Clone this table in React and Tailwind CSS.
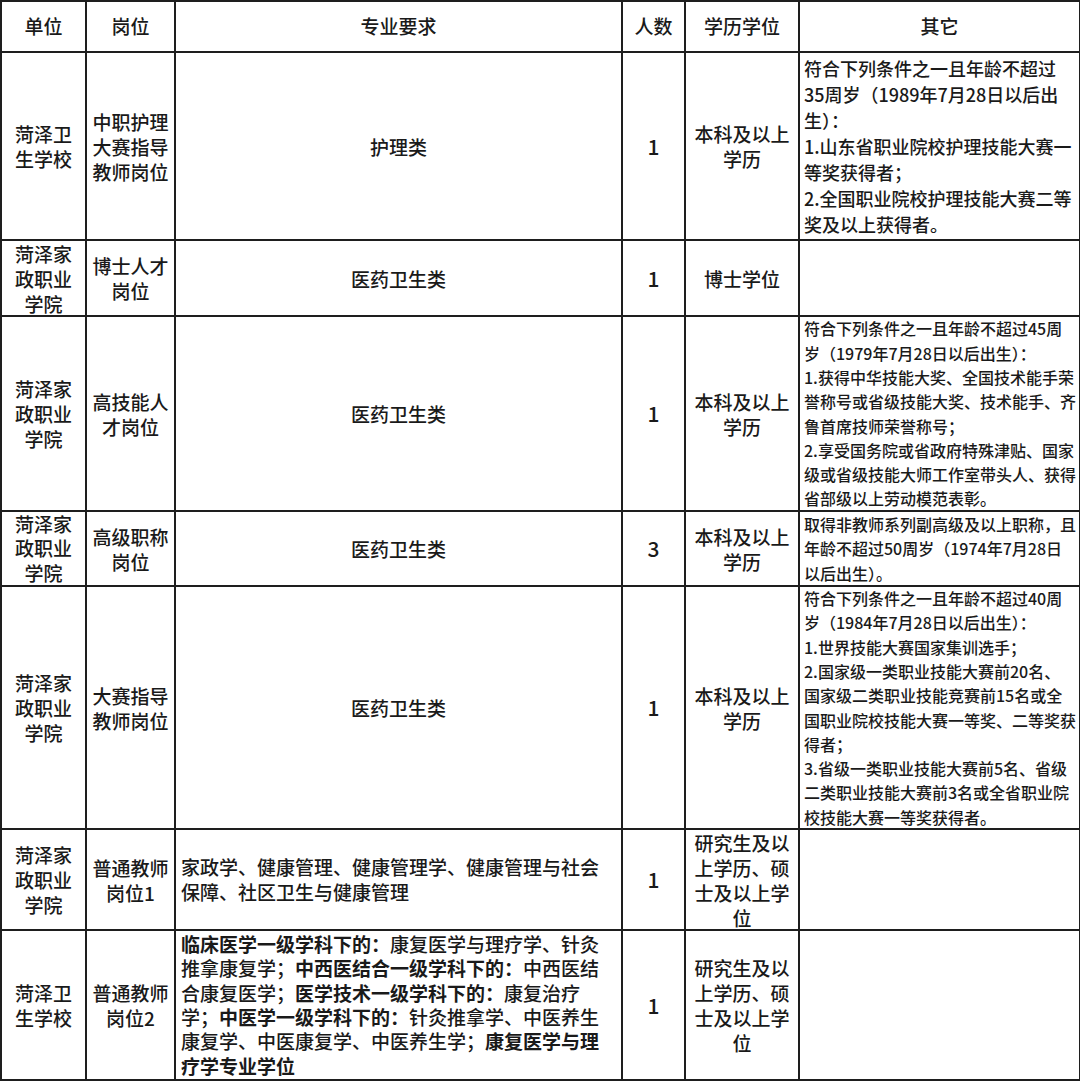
import React from "react";

// Column widths include each cell's 2px right border
const COLS = "grid-cols-[85px_89px_447px_63px_114px_281px]";
const ROWS = "grid-rows-[51px_188px_76px_195px_75px_243px_101px_150px]";

const FONT = { fontFamily: '"Noto Sans CJK SC", "Noto Sans", sans-serif' };

function Cell({ children, left = false, className = "" }) {
  return (
    <div
      className={`border-r-2 border-b-2 border-[#1e1e1e] flex items-center ${
        left ? "justify-start text-left pl-[4px]" : "justify-center text-center"
      } ${className}`}
    >
      <div className="whitespace-nowrap">{children}</div>
    </div>
  );
}

function Lines({ lines }) {
  return lines.map((l, i) => (
    <div key={i}>{l}</div>
  ));
}

const B = ({ children }) => <span className="font-bold">{children}</span>;

const rows = [
  {
    unit: ["菏泽卫", "生学校"],
    post: ["中职护理", "大赛指导", "教师岗位"],
    major: "护理类",
    count: "1",
    edu: ["本科及以上", "学历"],
    other: [
      "符合下列条件之一且年龄不超过",
      "35周岁（1989年7月28日以后出",
      "生）：",
      "1.山东省职业院校护理技能大赛一",
      "等奖获得者；",
      "2.全国职业院校护理技能大赛二等",
      "奖及以上获得者。",
    ],
    big: true,
  },
  {
    unit: ["菏泽家", "政职业", "学院"],
    post: ["博士人才", "岗位"],
    major: "医药卫生类",
    count: "1",
    edu: ["博士学位"],
    other: [],
  },
  {
    unit: ["菏泽家", "政职业", "学院"],
    post: ["高技能人", "才岗位"],
    major: "医药卫生类",
    count: "1",
    edu: ["本科及以上", "学历"],
    other: [
      "符合下列条件之一且年龄不超过45周",
      "岁（1979年7月28日以后出生）：",
      "1.获得中华技能大奖、全国技术能手荣",
      "誉称号或省级技能大奖、技术能手、齐",
      "鲁首席技师荣誉称号；",
      "2.享受国务院或省政府特殊津贴、国家",
      "级或省级技能大师工作室带头人、获得",
      "省部级以上劳动模范表彰。",
    ],
  },
  {
    unit: ["菏泽家", "政职业", "学院"],
    post: ["高级职称", "岗位"],
    major: "医药卫生类",
    count: "3",
    edu: ["本科及以上", "学历"],
    other: [
      "取得非教师系列副高级及以上职称，且",
      "年龄不超过50周岁（1974年7月28日",
      "以后出生）。",
    ],
    tight: true,
  },
  {
    unit: ["菏泽家", "政职业", "学院"],
    post: ["大赛指导", "教师岗位"],
    major: "医药卫生类",
    count: "1",
    edu: ["本科及以上", "学历"],
    other: [
      "符合下列条件之一且年龄不超过40周",
      "岁（1984年7月28日以后出生）：",
      "1.世界技能大赛国家集训选手；",
      "2.国家级一类职业技能大赛前20名、",
      "国家级二类职业技能竞赛前15名或全",
      "国职业院校技能大赛一等奖、二等奖获",
      "得者；",
      "3.省级一类职业技能大赛前5名、省级",
      "二类职业技能大赛前3名或全省职业院",
      "校技能大赛一等奖获得者。",
    ],
  },
  {
    unit: ["菏泽家", "政职业", "学院"],
    post: ["普通教师", "岗位1"],
    majorLines: [
      "家政学、健康管理、健康管理学、健康管理与社会",
      "保障、社区卫生与健康管理",
    ],
    count: "1",
    edu: ["研究生及以", "上学历、硕", "士及以上学", "位"],
    other: [],
  },
  {
    unit: ["菏泽卫", "生学校"],
    post: ["普通教师", "岗位2"],
    majorLines: [
      <>
        <B>临床医学一级学科下的：</B>康复医学与理疗学、针灸
      </>,
      <>
        推拿康复学；<B>中西医结合一级学科下的：</B>中西医结
      </>,
      <>
        合康复医学；<B>医学技术一级学科下的：</B>康复治疗
      </>,
      <>
        学；<B>中医学一级学科下的：</B>针灸推拿学、中医养生
      </>,
      <>
        康复学、中医康复学、中医养生学；<B>康复医学与理</B>
      </>,
      <>
        <B>疗学专业学位</B>
      </>,
    ],
    count: "1",
    edu: ["研究生及以", "上学历、硕", "士及以上学", "位"],
    other: [],
  },
];

export default function App() {
  return (
    <div
      className="w-[1080px] h-[1081px] overflow-hidden bg-white text-[#1a1a1a] font-medium"
      style={FONT}
    >
      <div
        className={`grid ${COLS} ${ROWS} w-[1081px] border-l-2 border-t-2 border-[#1e1e1e] text-[19px] leading-[25px]`}
      >
        {/* Header */}
        <Cell className="pb-[3px]">单位</Cell>
        <Cell className="pb-[3px]">岗位</Cell>
        <Cell className="pb-[3px]">专业要求</Cell>
        <Cell className="pb-[3px]">人数</Cell>
        <Cell className="pb-[3px]">学历学位</Cell>
        <Cell className="pb-[3px]">其它</Cell>

        {rows.map((r, i) => (
          <React.Fragment key={i}>
            <Cell className={r.tight ? "leading-[24.3px]" : ""}>
              <Lines lines={r.unit} />
            </Cell>
            <Cell>
              <Lines lines={r.post} />
            </Cell>
            {r.majorLines ? (
              <Cell left className="pl-[5px] leading-[24.4px]">
                <Lines lines={r.majorLines} />
              </Cell>
            ) : (
              <Cell>{r.major}</Cell>
            )}
            <Cell className="text-[21px]">{r.count}</Cell>
            <Cell>
              <Lines lines={r.edu} />
            </Cell>
            <Cell
              left
              className={
                r.big
                  ? "text-[18px] leading-[26px]"
                  : "text-[16px] leading-[24.3px]"
              }
            >
              <Lines lines={r.other} />
            </Cell>
          </React.Fragment>
        ))}
      </div>
    </div>
  );
}
